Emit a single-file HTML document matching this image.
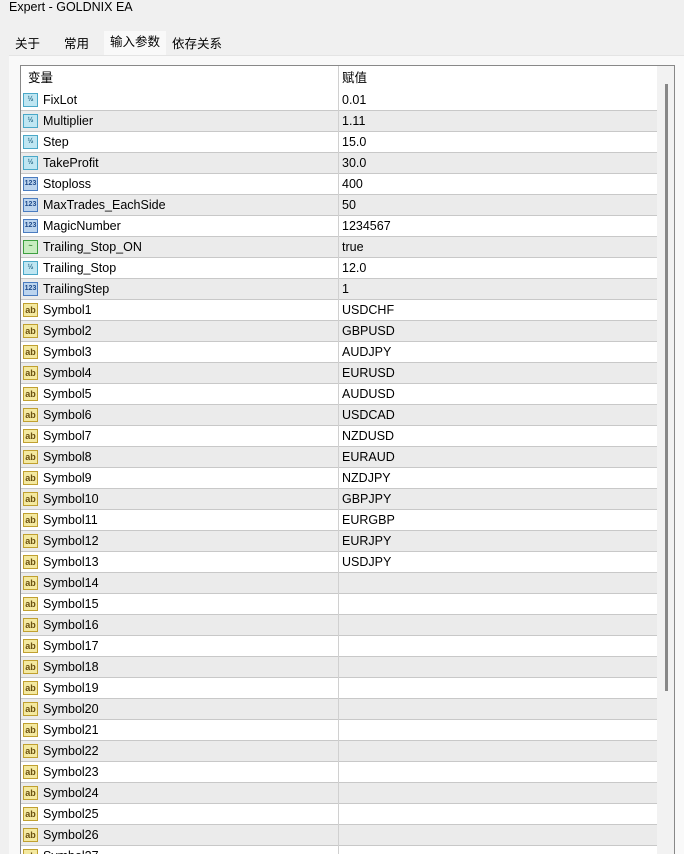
<!DOCTYPE html>
<html><head><meta charset="utf-8"><style>
*{margin:0;padding:0;box-sizing:border-box}
body{width:684px;height:854px;overflow:hidden;background:#f0f0f0;font-family:"Liberation Sans","Noto Sans CJK SC",sans-serif;font-size:12.5px;color:#000;position:relative}
.title{position:absolute;left:9px;top:0;font-size:12.5px;line-height:14px}
.tab{position:absolute;top:33px;height:22px;line-height:22px;font-size:12.5px;padding:0 6px}
.panel{position:absolute;left:9px;top:55px;width:675px;height:799px;background:#f9f9f9;border-top:1px solid #e4e4e4}
.frame{position:absolute;left:20px;top:65px;width:655px;height:789px;border:1px solid #888;border-bottom:none;background:#fff;overflow:hidden}
.hdr{position:absolute;left:0;top:0;width:636px;height:24px;line-height:24px;background:#fff}
.row{position:absolute;left:0;width:636px;height:21px;line-height:21px;border-bottom:1px solid #c8c8c8}
.g{background:#ebebeb}
.n{position:absolute;left:22px}
.v{position:absolute;left:321px}
.ic{position:absolute;left:2px;top:3px;width:15px;height:14px;border:1px solid;font-size:7px;line-height:12px;text-align:center;font-weight:bold}
.f{background:#bfe6f2;border-color:#4aa8c8;color:#2a6a88}
.i{background:#bcd4ee;border-color:#4a7cc0;color:#1e4a8a}
.b{background:#c8ecc0;border-color:#3ea040;color:#2a7a2a}
.s{background:#f4e9a0;border-color:#c0a030;color:#6a5010;font-size:9px}
.sb{position:absolute;left:636px;top:0;width:18px;height:800px;background:#f2f2f2}
.th{position:absolute;left:8px;top:18px;width:3px;height:607px;background:#888}
</style></head><body>
<div class="title">Expert - GOLDNIX EA</div>
<div class="tab" style="left:9px;">关于</div>
<div class="tab" style="left:58px;">常用</div>
<div class="tab" style="left:104px;background:#f9f9f9;top:31px;height:24px;">输入参数</div>
<div class="tab" style="left:166px;">依存关系</div>
<div class="panel"></div>
<div class="frame">
<div class="hdr"><span style="position:absolute;left:7px">变量</span><span class="v">赋值</span></div>
<div style="position:absolute;left:317px;top:0;width:1px;height:800px;background:#d0d0d0"></div>
<div class="sb"><div class="th"></div></div>
</div>
<div id="r" style="position:absolute;left:21px;top:90px;width:636px;height:764px;overflow:hidden">
<div class="row" style="top:0"><span class="ic f">½</span><span class="n">FixLot</span><span class="v">0.01</span></div>
<div class="row g" style="top:21px"><span class="ic f">½</span><span class="n">Multiplier</span><span class="v">1.11</span></div>
<div class="row" style="top:42px"><span class="ic f">½</span><span class="n">Step</span><span class="v">15.0</span></div>
<div class="row g" style="top:63px"><span class="ic f">½</span><span class="n">TakeProfit</span><span class="v">30.0</span></div>
<div class="row" style="top:84px"><span class="ic i">123</span><span class="n">Stoploss</span><span class="v">400</span></div>
<div class="row g" style="top:105px"><span class="ic i">123</span><span class="n">MaxTrades_EachSide</span><span class="v">50</span></div>
<div class="row" style="top:126px"><span class="ic i">123</span><span class="n">MagicNumber</span><span class="v">1234567</span></div>
<div class="row g" style="top:147px"><span class="ic b">~</span><span class="n">Trailing_Stop_ON</span><span class="v">true</span></div>
<div class="row" style="top:168px"><span class="ic f">½</span><span class="n">Trailing_Stop</span><span class="v">12.0</span></div>
<div class="row g" style="top:189px"><span class="ic i">123</span><span class="n">TrailingStep</span><span class="v">1</span></div>
<div class="row" style="top:210px"><span class="ic s">ab</span><span class="n">Symbol1</span><span class="v">USDCHF</span></div>
<div class="row g" style="top:231px"><span class="ic s">ab</span><span class="n">Symbol2</span><span class="v">GBPUSD</span></div>
<div class="row" style="top:252px"><span class="ic s">ab</span><span class="n">Symbol3</span><span class="v">AUDJPY</span></div>
<div class="row g" style="top:273px"><span class="ic s">ab</span><span class="n">Symbol4</span><span class="v">EURUSD</span></div>
<div class="row" style="top:294px"><span class="ic s">ab</span><span class="n">Symbol5</span><span class="v">AUDUSD</span></div>
<div class="row g" style="top:315px"><span class="ic s">ab</span><span class="n">Symbol6</span><span class="v">USDCAD</span></div>
<div class="row" style="top:336px"><span class="ic s">ab</span><span class="n">Symbol7</span><span class="v">NZDUSD</span></div>
<div class="row g" style="top:357px"><span class="ic s">ab</span><span class="n">Symbol8</span><span class="v">EURAUD</span></div>
<div class="row" style="top:378px"><span class="ic s">ab</span><span class="n">Symbol9</span><span class="v">NZDJPY</span></div>
<div class="row g" style="top:399px"><span class="ic s">ab</span><span class="n">Symbol10</span><span class="v">GBPJPY</span></div>
<div class="row" style="top:420px"><span class="ic s">ab</span><span class="n">Symbol11</span><span class="v">EURGBP</span></div>
<div class="row g" style="top:441px"><span class="ic s">ab</span><span class="n">Symbol12</span><span class="v">EURJPY</span></div>
<div class="row" style="top:462px"><span class="ic s">ab</span><span class="n">Symbol13</span><span class="v">USDJPY</span></div>
<div class="row g" style="top:483px"><span class="ic s">ab</span><span class="n">Symbol14</span></div>
<div class="row" style="top:504px"><span class="ic s">ab</span><span class="n">Symbol15</span></div>
<div class="row g" style="top:525px"><span class="ic s">ab</span><span class="n">Symbol16</span></div>
<div class="row" style="top:546px"><span class="ic s">ab</span><span class="n">Symbol17</span></div>
<div class="row g" style="top:567px"><span class="ic s">ab</span><span class="n">Symbol18</span></div>
<div class="row" style="top:588px"><span class="ic s">ab</span><span class="n">Symbol19</span></div>
<div class="row g" style="top:609px"><span class="ic s">ab</span><span class="n">Symbol20</span></div>
<div class="row" style="top:630px"><span class="ic s">ab</span><span class="n">Symbol21</span></div>
<div class="row g" style="top:651px"><span class="ic s">ab</span><span class="n">Symbol22</span></div>
<div class="row" style="top:672px"><span class="ic s">ab</span><span class="n">Symbol23</span></div>
<div class="row g" style="top:693px"><span class="ic s">ab</span><span class="n">Symbol24</span></div>
<div class="row" style="top:714px"><span class="ic s">ab</span><span class="n">Symbol25</span></div>
<div class="row g" style="top:735px"><span class="ic s">ab</span><span class="n">Symbol26</span></div>
<div class="row" style="top:756px"><span class="ic s">ab</span><span class="n">Symbol27</span></div>
<div style="position:absolute;left:317px;top:0;width:1px;height:800px;background:#d0d0d0"></div>
</div>
</body></html>
